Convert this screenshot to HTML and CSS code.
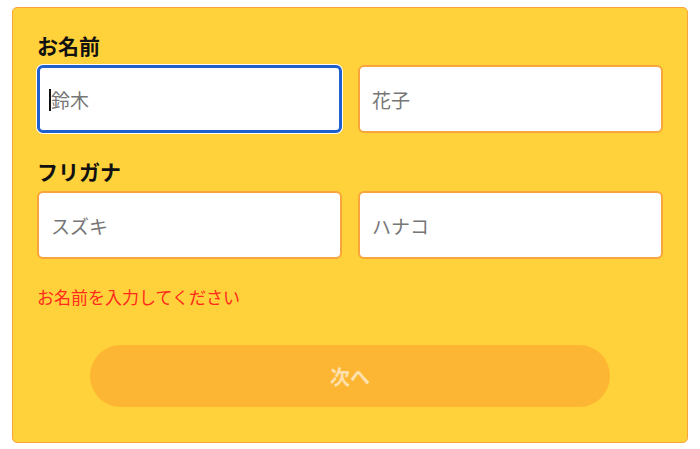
FILE: index.html
```html
<!DOCTYPE html>
<html lang="ja">
<head>
<meta charset="utf-8">
<title>お名前入力</title>
<link rel="stylesheet" href="styles.css">
</head>
<body>
<form class="card">
  <div class="group">
    <div class="label">お名前</div>
    <div class="row">
      <span class="field field--focus"><input class="input" type="text" placeholder="鈴木"></span>
      <span class="field"><input class="input" type="text" placeholder="花子"></span>
    </div>
  </div>
  <div class="group group--second">
    <div class="label">フリガナ</div>
    <div class="row">
      <span class="field"><input class="input" type="text" placeholder="スズキ"></span>
      <span class="field"><input class="input" type="text" placeholder="ハナコ"></span>
    </div>
  </div>
  <p class="error">お名前を入力してください</p>
  <div class="actions">
    <button class="next" type="button" disabled>次へ</button>
  </div>
</form>
</body>
</html>
```

FILE: styles.css
```css
html, body {
  margin: 0;
  padding: 0;
  background: #ffffff;
}
body {
  font-family: "Noto Sans CJK JP", "Noto Sans", sans-serif;
  padding-top: 7px;
}
.card {
  margin: 0 12px;
  box-sizing: border-box;
  width: 676px;
  height: 436px;
  background: #ffd13a;
  border: 1px solid #f8a63c;
  border-radius: 5px;
  padding: 23px 24px 0 24px;
}
.label {
  font-size: 21px;
  font-weight: 700;
  line-height: 28px;
  color: #111111;
}
.row {
  display: grid;
  grid-template-columns: 1fr 1fr;
  column-gap: 16px;
  margin-top: 6px;
}
.group--second {
  margin-top: 24px;
}
.field {
  display: block;
  position: relative;
}
.input {
  display: block;
  box-sizing: border-box;
  width: 100%;
  height: 68px;
  margin: 0;
  padding: 0 12px;
  border: 2px solid #f9a53d;
  border-radius: 6px;
  background: #ffffff;
  font-family: "Noto Sans CJK JP", "Noto Sans", sans-serif;
  font-size: 19px;
  color: #333333;
  outline: none;
}
.input::placeholder {
  color: #767676;
  opacity: 1;
}
.field--focus .input {
  border: 3px solid #1f5fce;
  box-shadow: 0 0 0 1px #ffffff;
  padding-left: 11px;
}
.field--focus::after {
  content: "";
  position: absolute;
  left: 12px;
  top: 24px;
  width: 2px;
  height: 22px;
  background: #111111;
}
.error {
  margin: 26px 0 0 0;
  font-size: 17px;
  line-height: 24px;
  color: #ff2a1c;
}
.actions {
  display: flex;
  justify-content: center;
  margin-top: 36px;
}
.next {
  width: 520px;
  height: 62px;
  border: none;
  border-radius: 31px;
  background: #fdb633;
  color: rgba(255, 255, 255, 0.62);
  font-family: "Noto Sans CJK JP", "Noto Sans", sans-serif;
  font-size: 20px;
  font-weight: 700;
  padding: 0;
}
```
